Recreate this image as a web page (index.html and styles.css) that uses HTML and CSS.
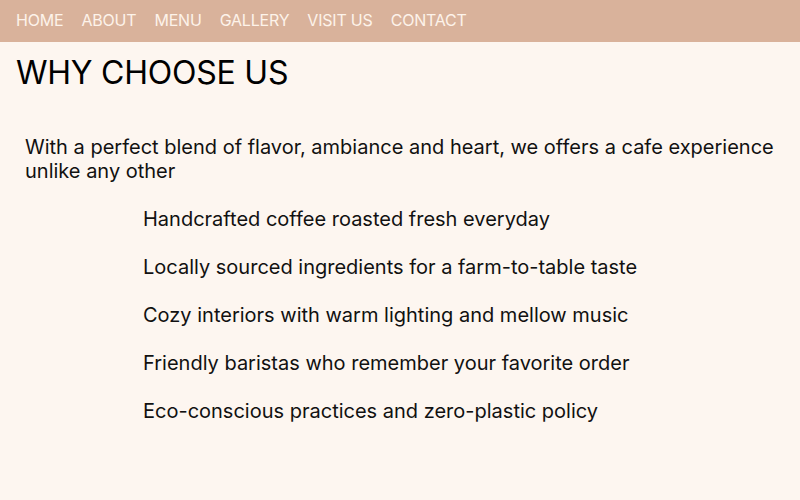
FILE: index.html
```html
<!DOCTYPE html>
<html>
<head>
<meta charset="utf-8">
<link rel="stylesheet" href="styles.css">
</head>
<body>
<nav class="nav">
  <a class="nav-link" href="#">HOME</a>
  <a class="nav-link" href="#">ABOUT</a>
  <a class="nav-link" href="#">MENU</a>
  <a class="nav-link" href="#">GALLERY</a>
  <a class="nav-link" href="#">VISIT US</a>
  <a class="nav-link" href="#">CONTACT</a>
</nav>
<main class="main">
  <h1 class="title">WHY CHOOSE US</h1>
  <section class="why">
    <p class="intro">With a perfect blend of flavor, ambiance and heart, we offers a cafe experience unlike any other</p>
    <ul class="features">
      <li class="feature">Handcrafted coffee roasted fresh everyday</li>
      <li class="feature">Locally sourced ingredients for a farm-to-table taste</li>
      <li class="feature">Cozy interiors with warm lighting and mellow music</li>
      <li class="feature">Friendly baristas who remember your favorite order</li>
      <li class="feature">Eco-conscious practices and zero-plastic policy</li>
    </ul>
  </section>
</main>
</body>
</html>
```
FILE: styles.css
```css
html, body {
  margin: 0;
  padding: 0;
  background: #fdf6f0;
  font-family: Inter, "Noto Sans", sans-serif;
  color: #111;
}
.nav {
  display: flex;
  align-items: center;
  gap: 18px;
  height: 40px;
  padding: 0 16px 2px;
  background: #d9b29b;
}
.nav-link {
  color: #fdf3ea;
  text-decoration: none;
  font-size: 16px;
  letter-spacing: -0.2px;
}
.main {
  padding: 0 16px;
}
.title {
  margin: 11px 0 0;
  font-size: 32px;
  font-weight: 400;
  line-height: 40px;
  letter-spacing: -0.23px;
  color: #000;
}
.why {
  padding: 0 9px;
}
.intro {
  margin: 42px 0 0;
  font-size: 20px;
  line-height: 24px;
}
.features {
  list-style: none;
  margin: 24px 0 0;
  padding: 0 0 0 118px;
}
.feature {
  font-size: 20px;
  line-height: 24px;
  margin-bottom: 24px;
}
```
